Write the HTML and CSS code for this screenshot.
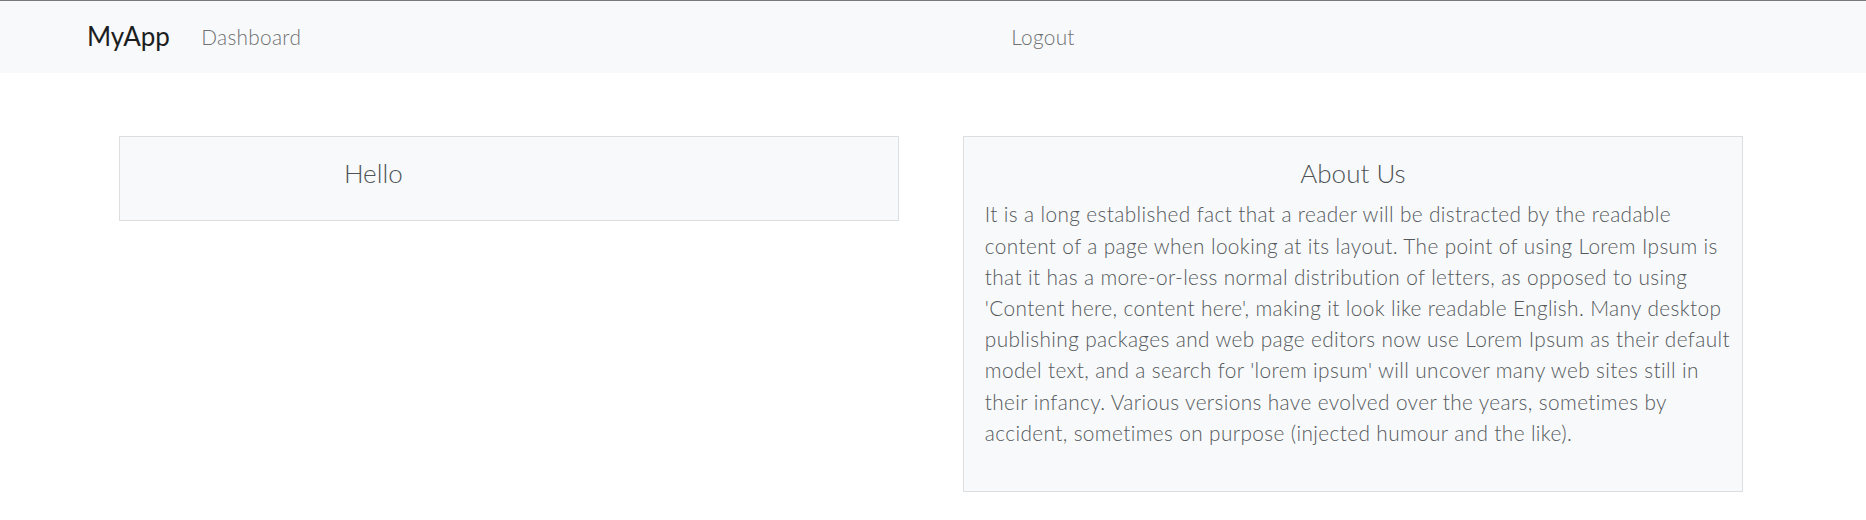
FILE: index.html
```html
<!DOCTYPE html>
<html lang="en">
<head>
<meta charset="utf-8">
<title>MyApp</title>
<link rel="stylesheet" href="styles.css">
</head>
<body>
<nav class="navbar">
  <a class="brand" href="#">MyApp</a>
  <ul class="nav-left">
    <li><a class="nav-link" href="#">Dashboard</a></li>
  </ul>
  <ul class="nav-right">
    <li><a class="nav-link" href="#">Logout</a></li>
  </ul>
</nav>
<main class="content">
  <section class="card card-hello">
    <h5 class="card-title hello-title">Hello</h5>
  </section>
  <section class="card card-about">
    <h5 class="card-title about-title">About Us</h5>
    <p class="card-text">It is a long established fact that a reader will be distracted by the readable<br>
content of a page when looking at its layout. The point of using Lorem Ipsum is<br>
that it has a more-or-less normal distribution of letters, as opposed to using<br>
'Content here, content here', making it look like readable English. Many desktop<br>
publishing packages and web page editors now use Lorem Ipsum as their default<br>
model text, and a search for 'lorem ipsum' will uncover many web sites still in<br>
their infancy. Various versions have evolved over the years, sometimes by<br>
accident, sometimes on purpose (injected humour and the like).</p>
  </section>
</main>
</body>
</html>
```
FILE: styles.css
```css
* { box-sizing: border-box; }
html, body { margin: 0; padding: 0; }
body {
  font-family: "Lato", "Noto Sans", sans-serif;
  font-weight: 300;
  background: #ffffff;
  color: #5a5e62;
}
ul { list-style: none; margin: 0; padding: 0; }
a { text-decoration: none; }

.navbar {
  height: 73px;
  border-top: 1px solid #777a7d;
  background: #f8f9fa;
  display: flex;
  align-items: center;
  padding-left: 87px;
  padding-bottom: 2px;
}
.brand {
  font-size: 26px;
  font-weight: 400;
  color: #1c1e21;
  line-height: 39px;
  margin-right: 21px;
}
.nav-link {
  display: block;
  font-size: 20.8px;
  line-height: 31px;
  padding: 0 10.4px;
  color: #6f7173;
  letter-spacing: 0.3px;
}
.nav-left { display: flex; width: 810px; }
.nav-right { display: flex; }

.content {
  display: flex;
  align-items: flex-start;
  gap: 64px;
  padding: 63px 0 0 119px;
}
.card {
  width: 780px;
  background: #f8f9fa;
  border: 1px solid #dcdfe2;
  padding: 20.8px;
}
.card-title {
  margin: 0 0 10.4px;
  font-size: 26px;
  font-weight: 300;
  line-height: 31.2px;
  color: #4f5357;
}
.hello-title {
  width: 465px;
  text-align: center;
}
.about-title { text-align: center; }
.card-text {
  margin: -1px -18px 21.8px 0;
  font-size: 20.8px;
  line-height: 31.2px;
  letter-spacing: 0.38px;
  color: #55595d;
}
```
